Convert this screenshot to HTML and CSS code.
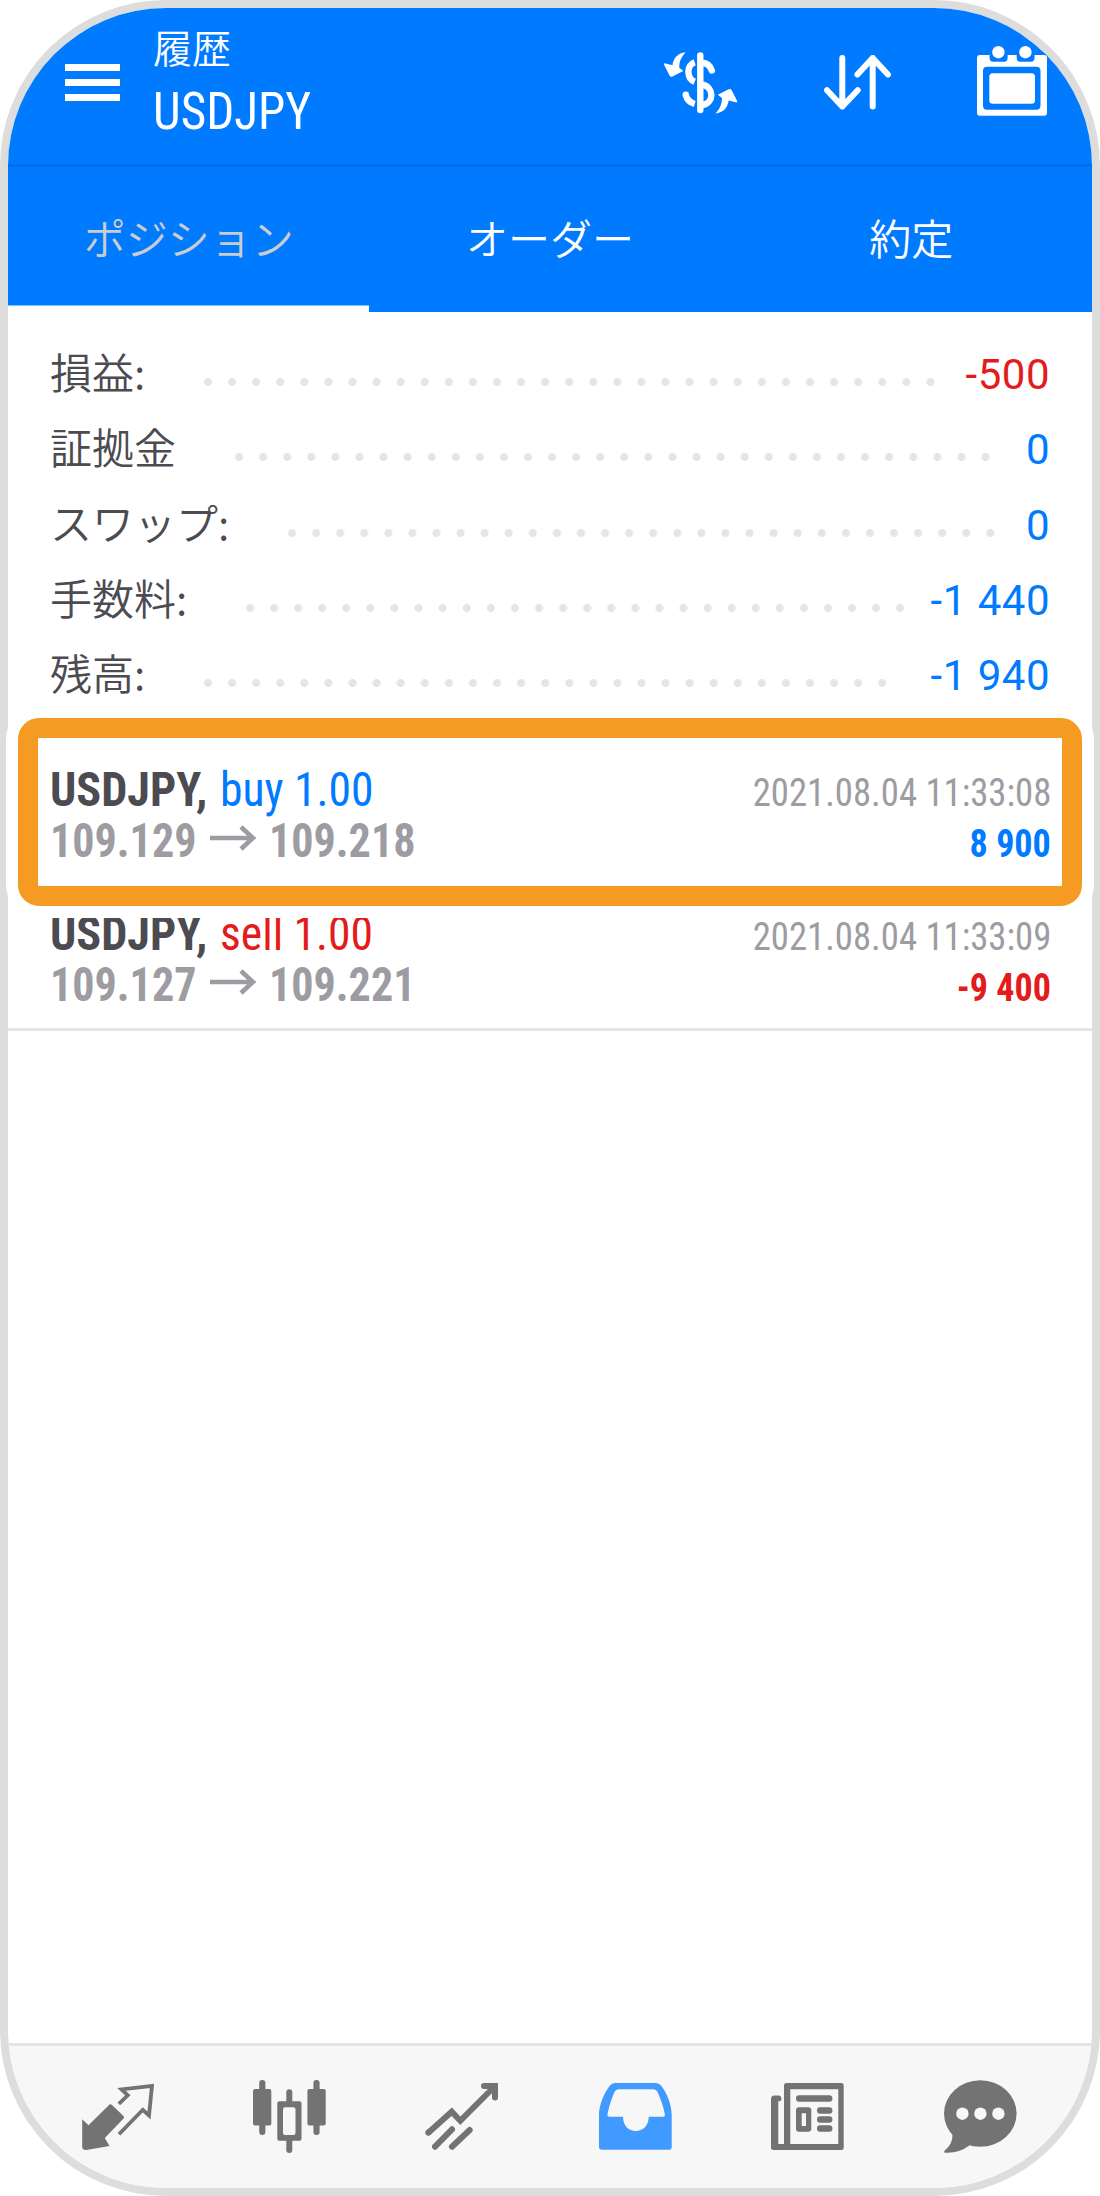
FILE: index.html
```html
<!DOCTYPE html>
<html lang="ja">
<head>
<meta charset="utf-8">
<title>履歴 USDJPY</title>
<link rel="stylesheet" href="styles.css">
</head>
<body>
<div class="stage">
  <div class="phone">
    <header class="topbar">
      <div class="menu"><i></i><i></i><i></i></div>
      <div class="heading">
        <span class="heading-title">履歴</span>
        <span class="heading-symbol cond">USDJPY</span>
      </div>
      <svg class="ic-currency" width="74" height="62" viewBox="0 0 74 62">
        <g fill="none" stroke="#fff" stroke-width="6.4">
          <path d="M36.3 3.4V58" stroke-linecap="round"/>
          <path d="M30.7 10.2C22.3 13 22.3 26.500 30.700 29.800"/>
          <path d="M38 10.800C43.500 11.200 46.500 14.500 47.800 18.400" stroke-linecap="round"/>
          <path d="M38 32.500C50.500 35 50.500 51 38 53"/>
          <path d="M21.800 43C22.800 47.500 26 50.500 30.700 52"/>
          <path d="M21.800 42.800V43" stroke-linecap="round"/>
        </g>
        <g fill="#fff">
          <path id="turn" d="M21.700.3C14 1 9.500 6 8.500 13.200L.6 11.200Q-.2 11.500.2 13L5.500 23.500Q6.500 25.300 8.500 24.500L19.300 19L15.300 15.800C15 10 17.500 4.500 21.700.3Z"/>
          <use href="#turn" transform="rotate(180 36.6 30.9)"/>
        </g>
      </svg>
      <svg class="ic-sort" width="67" height="55" viewBox="0 0 67 55" fill="none" stroke="#fff" stroke-width="6" stroke-linecap="round" stroke-linejoin="round">
        <path d="M18.300 3V51.500M3 35.200L18.300 51.500L33.700 35.200M48.700 51.500V3M33.400 19.500L48.700 3L63.900 19.500"/>
      </svg>
      <svg class="ic-calendar" width="70" height="70" viewBox="0 0 70 70" fill="#fff">
        <path fill-rule="evenodd" d="M3 9H12.600V12Q12.600 15.700 16 15.700H27.500Q30.600 15.700 30.600 12V9H39.700V12Q39.700 15.700 43 15.700H54Q57.500 15.700 57.500 12V9H67Q70 9 70 12V66.500Q70 69.700 67 69.700H3Q0 69.700 0 66.500V12Q0 9 3 9ZM10 20.700Q6 20.700 6 25V59.500Q6 63.700 10 63.700H59.500Q63.500 63.700 63.500 59.500V25Q63.500 20.700 59.500 20.700Z"/>
        <rect x="12.300" y="27.300" width="45.700" height="30.400" rx="3.500"/>
        <circle cx="21.400" cy="6.200" r="6.200"/><circle cx="48.400" cy="6.200" r="6.200"/>
      </svg>
    </header>

    <nav class="tabs">
      <div class="tab tab-active">ポジション</div>
      <div class="tab">オーダー</div>
      <div class="tab">約定</div>
    </nav>

    <section class="summary">
      <div class="sum-row"><span>損益:</span><i class="dots" style="--n:31"></i><b class="loss">-500</b></div>
      <div class="sum-row"><span>証拠金</span><i class="dots" style="--n:32"></i><b>0</b></div>
      <div class="sum-row"><span>スワップ:</span><i class="dots" style="--n:30"></i><b>0</b></div>
      <div class="sum-row"><span>手数料:</span><i class="dots" style="--n:28"></i><b>-1 440</b></div>
      <div class="sum-row"><span>残高:</span><i class="dots" style="--n:29"></i><b>-1 940</b></div>
    </section>

    <section class="deals">
      <div class="deal">
        <div class="line">
          <span class="symbol cond">USDJPY,</span><span class="side cond buy">buy 1.00</span><span class="time cond">2021.08.04 11:33:08</span>
        </div>
        <div class="line">
          <span class="price cond">109.129</span>
          <svg class="arrow" width="47" height="26" viewBox="0 0 47 26"><path d="M0 13H43M31 2L43 13L31 24" fill="none" stroke="#9c9ca2" stroke-width="4.600"/></svg>
          <span class="price cond">109.218</span><span class="amount cond buy">8 900</span>
        </div>
      </div>
      <div class="deal deal-last">
        <div class="line">
          <span class="symbol cond">USDJPY,</span><span class="side cond sell">sell 1.00</span><span class="time cond">2021.08.04 11:33:09</span>
        </div>
        <div class="line">
          <span class="price cond">109.127</span>
          <svg class="arrow" width="47" height="26" viewBox="0 0 47 26"><path d="M0 13H43M31 2L43 13L31 24" fill="none" stroke="#9c9ca2" stroke-width="4.600"/></svg>
          <span class="price cond">109.221</span><span class="amount cond sell">-9 400</span>
        </div>
      </div>
    </section>

    <footer class="bottombar">
      <svg viewBox="-1 0 73 73" fill="#737373">
        <path d="M.2 39.300L6.500 45.300L27.800 24.300Q28.800 23.800 30 25L41.500 36Q42.500 37.200 41.800 38.300L22.800 58L27.500 66L4.500 70Q.2 70.200.2 67Z"/>
        <path d="M36.800 23.900L45.800 15.300L39.500 9.300L70 5.800L67 35.500L60.800 29.800L37 54.300" fill="none" stroke="#737373" stroke-width="3.800"/>
      </svg>
      <svg viewBox="0 0 73 73" fill="#737373">
        <rect x="0" y="9" width="18.300" height="36.500" rx="2"/><rect x="6.200" y="0" width="6.200" height="55" rx="3"/>
        <rect x="54.400" y="9" width="18.300" height="36.500" rx="2"/><rect x="60.400" y="0" width="6.200" height="55" rx="3"/>
        <rect x="33.300" y="9.300" width="6" height="16" rx="3"/><rect x="33.300" y="56" width="6" height="17" rx="3"/>
        <path fill-rule="evenodd" d="M26.300 21.300H46.500Q48.500 21.300 48.500 23.300V58.700Q48.500 60.700 46.500 60.700H26.300Q24.300 60.700 24.300 58.700V23.300Q24.300 21.300 26.300 21.300ZM32 27.300Q30 27.300 30 29.300V53Q30 55 32 55H40.500Q42.500 55 42.500 53V29.300Q42.500 27.300 40.500 27.300Z"/>
      </svg>
      <svg viewBox="0 0 73 73" fill="none" stroke="#737373" stroke-width="6">
        <path d="M2.300 52.700L25.700 31.700L34.300 40.800L68 7"/>
        <path d="M58 6.100H69V17.500M9 66.700L26 49.300M26 66.700L43.700 50M2.300 52.700L3 52" stroke-linecap="round"/>
      </svg>
      <svg viewBox="0 0 73 73" fill="#409aff">
        <path fill-rule="evenodd" d="M0 35C0 25 5 13 11 5.500Q13 3 16 3H57Q60 3 62 5.500C68 13 72.700 25 72.700 35V67Q72.700 69.700 70 69.700H3Q0 69.700 0 67ZM20 9.300Q16.500 9.300 15 13C12 20 10 27 8.500 34Q8 36.700 10.500 36.700H24C24 46 30 51 36.800 51C43.500 51 49.700 46 49.700 36.700H64Q66.300 36.700 65.800 34C64.500 27 62 20 59 13Q57.500 9.300 54 9.300Z"/>
      </svg>
      <svg viewBox="0 0 73 73" fill="#737373">
        <path fill-rule="evenodd" d="M3 64H13V5.500Q13 3 15.500 3H70.200Q72.700 3 72.700 5.500V67.500Q72.700 70 70.200 70H2.500Q0 70 0 67.500V19Q0 15.500 3.500 15.500H8Q10.300 15.500 10.300 18V20Q10.300 21.300 7.300 21.300V64ZM19.300 9.300V64H67.300V9.300Z"/>
        <rect x="25" y="15.300" width="36.400" height="6.400" rx="3"/>
        <path fill-rule="evenodd" d="M28 27.300H37.300Q40.300 27.300 40.300 30.300V48.700Q40.300 51.700 37.300 51.700H28Q25 51.700 25 48.700V30.300Q25 27.300 28 27.300ZM30.700 33.300V46H35V33.300Z"/>
        <rect x="46" y="27.300" width="15.400" height="6.400" rx="3"/><rect x="46" y="36.300" width="15.400" height="6.400" rx="3"/><rect x="46" y="45.300" width="15.400" height="6.400" rx="3"/>
      </svg>
      <svg viewBox="0 0 73 73" fill="#737373">
        <ellipse cx="36.300" cy="33.500" rx="36.300" ry="33.300"/>
        <path d="M4 48L8.500 54.500Q9 64 .3 71Q-.3 72.700 1 72.700Q15 73.500 25.700 65.300L30 60Z"/>
        <g fill="#f7f7f7"><circle cx="18.400" cy="33.700" r="6.200"/><circle cx="36.400" cy="33.700" r="6.200"/><circle cx="54.400" cy="33.700" r="6.200"/></g>
      </svg>
    </footer>
  </div>
  <div class="highlight"></div>
</div>
</body>
</html>
```
FILE: styles.css
```css
* { box-sizing: border-box; }
body { margin: 0; background: #fff; }
i { font-style: normal; }
.stage { position: relative; width: 1100px; height: 2196px; }
.phone {
  width: 1100px; height: 2196px;
  display: flex; flex-direction: column;
  border: 8px solid #ddd; border-radius: 166px;
  overflow: hidden; background: #fff; color: #4b4b51;
  font-family: Roboto, "Noto Sans CJK JP", sans-serif;
}
/* condensed Roboto, narrowed slightly further per text style */
.cond {
  font-family: "Roboto Condensed", Roboto, sans-serif; font-stretch: 75%; white-space: nowrap;
  transform: scaleX(var(--narrow, 1)); transform-origin: left center;
}

.topbar {
  flex: none; height: 159px; display: flex; align-items: flex-start;
  background: #007aff; border-bottom: 3px solid #006fe8; color: #fff;
}
.menu { display: flex; flex-direction: column; gap: 8px; margin: 56px 33px 0 57px; }
.menu i { width: 55px; height: 7px; background: #fff; }
.heading { width: 511px; display: flex; flex-direction: column; align-items: flex-start; padding-top: 14px; }
.heading-title { font: 350 39px/48px "Noto Sans CJK JP", sans-serif; }
.heading-symbol { --narrow: .965; font-size: 51px; line-height: 60px; margin-top: 12px; }
.ic-currency { margin: 44px 86px 0 0; }
.ic-sort { margin: 47px 86px 0 0; }
.ic-calendar { margin-top: 38px; }
.topbar svg { flex: none; }

.tabs { flex: none; display: flex; height: 144.500px; background: #007aff; color: #fff; }
.tab {
  flex: 1; display: flex; align-items: center; justify-content: center; padding-bottom: 4px;
  font: 350 42px/60px "Noto Sans CJK JP", sans-serif;
}
.tab-active { color: #ccc; box-shadow: inset 0 -6.500px #fff; }

.summary { flex: none; padding: 24px 42px 0 42px; height: 407px; }
.sum-row { display: flex; height: 75.300px; align-items: center; font: 350 42px/75px "Noto Sans CJK JP", sans-serif; }
.sum-row span { padding-bottom: 5px; }
.sum-row b { margin-left: auto; font: 42px/75px Roboto, sans-serif; letter-spacing: .5px; color: #007aff; padding-top: 3px; }
.sum-row .loss { color: #e41b1b; }
.dots {
  width: calc(var(--n) * 24.080px); height: 8px; margin: 18px 0 0 51px;
  background: radial-gradient(circle at center, #e5e5e5 3.600px, transparent 4.400px) 0 0 / 24.080px 8px repeat-x;
}

.deal { height: 144.700px; padding: 25px 41px 0 42px; }
.deals { flex: none; margin-top: 20px; }
.deal-last { border-bottom: 3px solid #e5e5e5; height: 147.500px; }
.line { display: flex; align-items: baseline; height: 51px; line-height: 51px; }
.symbol { --narrow: .962; font-size: 48px; font-weight: 700; width: 170px; }
.side { --narrow: .95; font-size: 48px; }
.price { --narrow: .918; font-size: 48px; font-weight: 700; color: #9c9ca2; width: 149px; }
.arrow { width: 47px; height: 26px; margin: 0 12px 0 11px; transform: translateY(-6px); }
.time, .amount { margin-left: auto; font-size: 39px; transform-origin: right center; }
.time { --narrow: .941; color: #9c9ca2; }
.amount { --narrow: .925; font-weight: 700; }
.buy { color: #007aff; }
.sell { color: #e41b1b; }

.bottombar {
  margin-top: auto; flex: none; height: 145px;
  border-top: 3px solid #e4e4e4; background: #f7f7f7;
  display: flex; justify-content: space-between; align-items: flex-start;
  padding: 34px 75px 0 72.500px;
}
.bottombar svg { width: 73px; height: 73px; overflow: visible; }

/* callout frame laid over the first deal, with a white outline */
.highlight {
  position: absolute; left: 18px; top: 718px; width: 1064px; height: 188px;
  border: 20px solid #f59b23; border-radius: 21px; box-shadow: 0 0 0 12px #fff;
}
```
